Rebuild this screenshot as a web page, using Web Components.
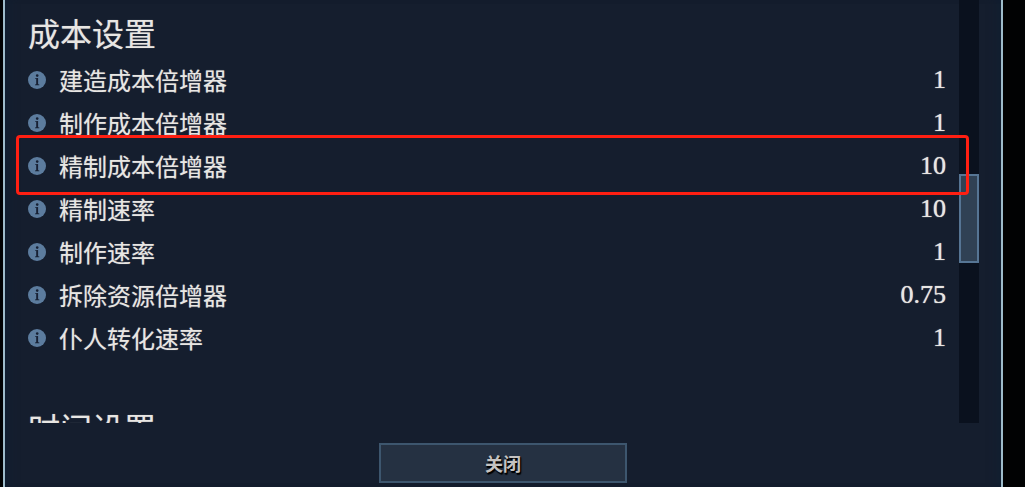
<!DOCTYPE html>
<html lang="zh-CN">
<head>
<meta charset="utf-8">
<title>成本设置</title>
<style>
  html, body { height: 100%; }
  body {
    margin: 0;
    background: #010203;
    color: #e8e6e3;
    font-family: "Noto Sans CJK SC", sans-serif;
    overflow: hidden;
  }
</style>
</head>
<body>
<settings-panel>
  <settings-section heading="成本设置">
    <setting-row value="1">建造成本倍增器</setting-row>
    <setting-row value="1">制作成本倍增器</setting-row>
    <setting-row value="10" highlighted>精制成本倍增器</setting-row>
    <setting-row value="10">精制速率</setting-row>
    <setting-row value="1">制作速率</setting-row>
    <setting-row value="0.75">拆除资源倍增器</setting-row>
    <setting-row value="1">仆人转化速率</setting-row>
  </settings-section>
  <settings-section heading="时间设置"></settings-section>
  <scroll-track slot="scrollbar"></scroll-track>
  <panel-button slot="footer">关闭</panel-button>
</settings-panel>

<script>
function define(name, markup, setup) {
  const template = document.createElement('template');
  template.innerHTML = markup;
  customElements.define(name, class extends HTMLElement {
    constructor() {
      super();
      this.attachShadow({ mode: 'open' }).append(template.content.cloneNode(true));
    }
    connectedCallback() {
      if (setup) setup(this, this.shadowRoot);
    }
  });
}

define('info-icon', `
  <style>
    :host { display: block; flex: none; width: 18px; height: 18px; }
    svg { display: block; width: 100%; height: 100%; }
  </style>
  <svg viewBox="0 0 18 18" role="img" aria-label="说明">
    <circle cx="9" cy="9" r="9" fill="#5c7c9e"/>
    <circle cx="9.2" cy="4.6" r="1.3" fill="#172033"/>
    <path d="M7 7.2L10.1 6.9V13.2L11.3 13.6V14.2H7V13.6L8.2 13.2V8.1L7 7.8Z" fill="#172033"/>
  </svg>`);

define('setting-row', `
  <style>
    :host { display: flex; align-items: center; position: relative; height: 43px; }
    .label {
      margin-left: 13px;
      font-size: 24px;
      line-height: 43px;
      text-shadow: 0 0 1px #e8e6e380;
    }
    .value {
      margin-left: auto;
      font-family: "Liberation Serif", serif;
      font-size: 26px;
      line-height: 43px;
      text-shadow: 0 0 1px #e8e6e3;
    }
    :host([highlighted])::after {
      content: "";
      position: absolute;
      inset: -9px -23px -8px -12px;
      border: 3px solid #ff1f12;
      border-radius: 4px;
      pointer-events: none;
    }
  </style>
  <info-icon></info-icon>
  <span class="label"><slot></slot></span>
  <span class="value"></span>`,
  (host, root) => {
    root.querySelector('.value').textContent = host.getAttribute('value');
  });

define('settings-section', `
  <style>
    :host { display: block; padding-bottom: 36px; }
    h2 {
      margin: 0;
      padding-top: 6px;
      font-size: 32px;
      font-weight: 400;
      line-height: 52px;
      text-shadow: 0 0 1px #e8e6e380;
    }
  </style>
  <h2></h2>
  <slot></slot>`,
  (host, root) => {
    root.querySelector('h2').textContent = host.getAttribute('heading');
  });

define('scroll-track', `
  <style>
    :host { display: block; width: 20px; background: #0a111e; }
    .thumb {
      box-sizing: border-box;
      height: 89px;
      margin-top: 174px;
      border: 2px solid #567594;
      background: #304154;
    }
  </style>
  <div class="thumb"></div>`);

define('panel-button', `
  <style>
    :host { display: block; }
    button {
      display: block;
      box-sizing: border-box;
      width: 248px;
      height: 40px;
      padding: 0;
      border: 2px solid #3d566e;
      background: #253142;
      color: #c4c2c1;
      font: 700 18px/36px "Noto Sans CJK SC", sans-serif;
      text-shadow: 1px 1px 1px #000, 1px 2px 1px #000;
    }
  </style>
  <button type="button"><slot></slot></button>`);

define('settings-panel', `
  <style>
    :host {
      display: flex;
      flex-direction: column;
      box-sizing: border-box;
      height: 100vh;
      margin: 0 22px 0 3px;
      border: solid #9ebccb;
      border-width: 0 2px;
      background: #151e2e;
      box-shadow: inset 12px 0 12px -10px #101e32, inset -12px 0 12px -10px #101e32;
    }
    .scroller {
      display: flex;
      flex: 1;
      min-height: 0;
      overflow: hidden;
      padding: 0 22px 0 23px;
    }
    .list { flex: 1; position: relative; z-index: 1; padding-right: 13px; }
    slot[name="scrollbar"] { display: flex; }
    footer { display: flex; justify-content: center; padding: 20px 0 4px; }
  </style>
  <div class="scroller">
    <div class="list"><slot></slot></div>
    <slot name="scrollbar"></slot>
  </div>
  <footer><slot name="footer"></slot></footer>`);
</script>
</body>
</html>
